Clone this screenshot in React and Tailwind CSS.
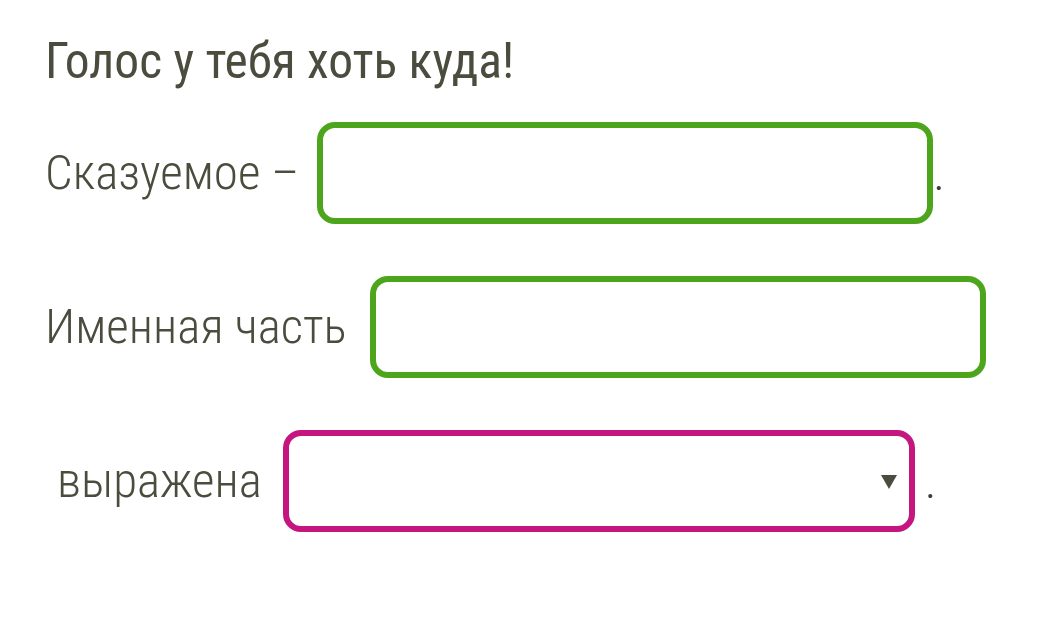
function Blank({ width, color = "green" }) {
  return (
    <input
      type="text"
      className={
        color === "green"
          ? "block h-[102px] rounded-[18px] border-[6px] border-[#4ca51b] bg-white outline-none"
          : "block h-[102px] rounded-[18px] border-[6px] border-[#c5157f] bg-white outline-none"
      }
      style={{ width }}
    />
  );
}

export default function App() {
  return (
    <div className="w-[1059px] h-[642px] bg-white text-[#4b4c3e] font-['Roboto',sans-serif] font-stretch-condensed">
      <div className="pl-[45px] pt-[37px] flex flex-col">
        <h1 className="text-[49.5px] leading-none font-normal">Голос у тебя хоть куда!</h1>

        <div className="mt-[35px] flex flex-col gap-[52px]">
          <div className="flex items-center text-[49px] leading-none font-light">
            <span>Сказуемое –</span>
            <div className="ml-[18px]">
              <Blank width="616px" />
            </div>
            <span className="ml-[0px] mt-[2px] text-[#3d3d35]">.</span>
          </div>

          <div className="flex items-center text-[49px] leading-none font-light">
            <span>Именная часть</span>
            <div className="ml-[23px]">
              <Blank width="616px" />
            </div>
          </div>

          <div className="flex items-center text-[49px] leading-none font-light">
            <span className="pl-[12px]">выражена</span>
            <div className="ml-[21px] relative h-[102px] w-[632px] rounded-[18px] border-[6px] border-[#c5157f] bg-white">
              <select className="appearance-none w-full h-full bg-transparent outline-none"></select>
              <svg
                className="absolute right-[12px] top-[39px]"
                width="16"
                height="14"
                viewBox="0 0 16 14"
              >
                <polygon points="0,0 16,0 8,14" fill="#4b4c3e" />
              </svg>
            </div>
            <span className="ml-[10px] mt-[2px] text-[#3d3d35]">.</span>
          </div>
        </div>
      </div>
    </div>
  );
}
